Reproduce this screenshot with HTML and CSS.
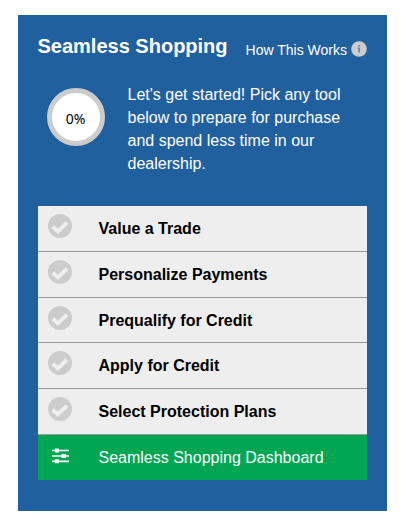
FILE: index.html
```html
<!DOCTYPE html>
<html lang="en">
<head>
    <meta charset="UTF-8">
    <meta name="viewport" content="width=device-width, initial-scale=1.0">
    <title>Seamless Shopping</title>
    <link rel="stylesheet" href="styles.css">
</head>
<body>
    <svg class="sprite" aria-hidden="true">
        <symbol id="check" viewBox="0 0 24 24">
            <circle cx="12" cy="12" r="12" fill="#ccc"/>
            <path d="M4.8 12.8L9.9 17.4L19 8.6" fill="none" stroke="#eee" stroke-width="3.9"/>
        </symbol>
    </svg>

    <div class="panel">
        <div class="panel-header">
            <h1>Seamless Shopping</h1>
            <a class="how-link"><span>How This Works</span>
                <svg class="info-icon" viewBox="0 0 16 16">
                    <circle cx="8" cy="8" r="7.8" fill="#ccc"/>
                    <path d="M7.2 4h2v1.4h-2zM6.4 6.6h2.7v5H7.4V7.8h-1z" fill="#6b86a8"/>
                </svg>
            </a>
        </div>

        <div class="intro">
            <div class="progress">0%</div>
            <p>Let's get started! Pick any tool below to prepare for purchase and spend less time in our dealership.</p>
        </div>

        <ul class="tools">
            <li class="tool"><svg class="check-icon"><use href="#check"/></svg><span>Value a Trade</span></li>
            <li class="tool"><svg class="check-icon"><use href="#check"/></svg><span>Personalize Payments</span></li>
            <li class="tool"><svg class="check-icon"><use href="#check"/></svg><span>Prequalify for Credit</span></li>
            <li class="tool"><svg class="check-icon"><use href="#check"/></svg><span>Apply for Credit</span></li>
            <li class="tool"><svg class="check-icon"><use href="#check"/></svg><span>Select Protection Plans</span></li>
            <li class="tool dashboard">
                <svg class="sliders-icon" viewBox="0 0 17 16">
                    <path d="M0 2.5h17M0 8h17M0 13.3h17" stroke="#fff" stroke-width="1.7"/>
                    <path d="M3 .5h4v4H3zM9.5 6h4.5v4H9.5zM3 11.3h4v4H3z" fill="#fff"/>
                </svg>
                <span>Seamless Shopping Dashboard</span>
            </li>
        </ul>
    </div>
</body>
</html>
```

FILE: styles.css
```css
* {
    margin: 0;
    padding: 0;
    box-sizing: border-box;
}

body {
    background: #fff;
    font-family: "Liberation Sans", Arial, sans-serif;
    font-size: 16px;
    padding: 15px 20px 15px 18px;
}

.sprite {
    display: none;
}

.panel {
    width: 369px;
    height: 496px;
    padding: 20px;
    background: #21609f;
    color: #fff;
}

.panel-header {
    display: flex;
    justify-content: space-between;
    height: 44px;
}

h1 {
    margin-left: -0.5px;
    font-size: 20px;
    line-height: 23px;
    white-space: nowrap;
}

.how-link {
    display: flex;
    align-items: center;
    gap: 4px;
    height: 16px;
    margin-top: 6px;
    font-size: 14px;
    line-height: 18px;
    white-space: nowrap;
}

.how-link span {
    padding-top: 2px;
}

.info-icon {
    width: 16px;
    height: 16px;
}

.intro {
    display: flex;
    height: 127.4px;
    padding-left: 8.5px;
}

.progress {
    flex: none;
    width: 58px;
    height: 58px;
    margin: 9px 23px 0 0;
    padding-top: 3px;
    border: 5px solid #ccc;
    border-radius: 50%;
    background: #fff;
    color: #000;
    font: 14px/46px "Noto Sans", sans-serif;
    text-align: center;
}

.intro p {
    width: 225px;
    padding-top: 4px;
    line-height: 23px;
}

.tools {
    list-style: none;
}

.tool {
    display: flex;
    height: 45.7px;
    padding-left: 10px;
    background: #eee;
    border-bottom: 1px solid #999;
    color: #000;
    font-weight: bold;
    line-height: 45.8px;
}

.check-icon {
    width: 24px;
    height: 24px;
    margin: 8px 26.5px 0 0;
}

.dashboard {
    height: 45.4px;
    padding-left: 14px;
    background: #00a651;
    border-bottom: none;
    color: #fff;
    font-weight: normal;
}

.sliders-icon {
    width: 17px;
    height: 16px;
    margin: 13.4px 29.5px 0 0;
}
```
